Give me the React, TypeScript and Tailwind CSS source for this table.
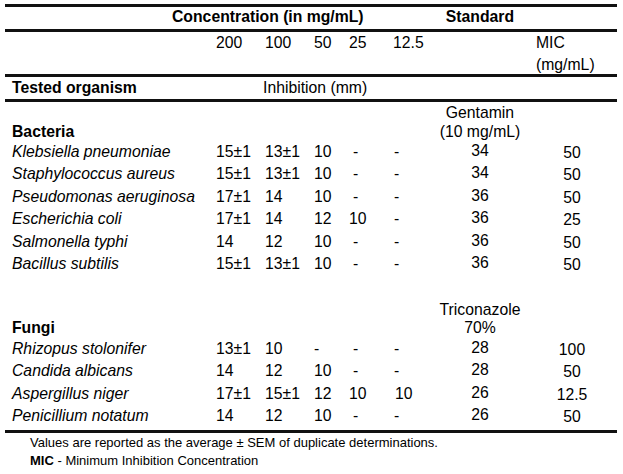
import React from "react";

const grid =
  "grid grid-cols-[204px_49px_49px_35px_44px_37px_100px_84px] pl-[7px]";

type Row = string[];

const bacteria: Row[] = [
  ["Klebsiella pneumoniae", "15±1", "13±1", "10", "-", "-", "34", "50"],
  ["Staphylococcus aureus", "15±1", "13±1", "10", "-", "-", "34", "50"],
  ["Pseudomonas aeruginosa", "17±1", "14", "10", "-", "-", "36", "50"],
  ["Escherichia coli", "17±1", "14", "12", "10", "-", "36", "25"],
  ["Salmonella typhi", "14", "12", "10", "-", "-", "36", "50"],
  ["Bacillus subtilis", "15±1", "13±1", "10", "-", "-", "36", "50"],
];

const fungi: Row[] = [
  ["Rhizopus stolonifer", "13±1", "10", "-", "-", "-", "28", "100"],
  ["Candida albicans", "14", "12", "10", "-", "-", "28", "50"],
  ["Aspergillus niger", "17±1", "15±1", "12", "10", "10", "26", "12.5"],
  ["Penicillium notatum", "14", "12", "10", "-", "-", "26", "50"],
];

function DataRow({ r }: { r: Row }) {
  return (
    <div className={`${grid} h-[22.4px] leading-[22.4px]`}>
      <div className="italic whitespace-nowrap">{r[0]}</div>
      <div>{r[1]}</div>
      <div>{r[2]}</div>
      <div>{r[3]}</div>
      <div className={r[4] === "-" ? "pl-[4px]" : ""}>{r[4]}</div>
      <div className={r[5] === "-" ? "pl-[1px]" : "pl-[2px]"}>{r[5]}</div>
      <div className="text-center -translate-y-[1px]">{r[6]}</div>
      <div className="text-center translate-y-[1px]">{r[7]}</div>
    </div>
  );
}

export default function App() {
  return (
    <div
      className="w-[623px] h-[474px] bg-white text-black text-[15.75px]"
      style={{ fontFamily: '"Liberation Sans", Arial, sans-serif' }}
    >
      <div className="ml-[5px] w-[612px] pt-[4px]">
        {/* Header row 1 */}
        <div className={`${grid} h-[25px] border-t-[3px] border-[#111] leading-[20px] font-bold`}>
          <div className="col-span-6 pl-[160px] whitespace-nowrap">
            Concentration (in mg/mL)
          </div>
          <div className="text-center">Standard</div>
          <div></div>
        </div>
        {/* Header row 2 */}
        <div className={`${grid} h-[45px] border-t-[3px] border-[#111] leading-[22px]`}>
          <div></div>
          <div>200</div>
          <div>100</div>
          <div>50</div>
          <div>25</div>
          <div>12.5</div>
          <div></div>
          <div className="pl-[6px]">
            MIC
            <br />
            (mg/mL)
          </div>
        </div>
        {/* Header row 3 */}
        <div className={`${grid} h-[25px] border-t-[3px] border-[#111] leading-[21px]`}>
          <div className="font-bold">Tested organism</div>
          <div></div>
          <div className="col-span-6 -ml-[2px]">Inhibition (mm)</div>
        </div>
        {/* Body */}
        <div className="border-t-[3px] border-[#111] pt-[1px]">
          <div className={`${grid} h-[38px] leading-[19px]`}>
            <div className="font-bold self-end">Bacteria</div>
            <div className="col-span-5"></div>
            <div className="text-center whitespace-nowrap">
              Gentamin
              <br />
              (10 mg/mL)
            </div>
            <div></div>
          </div>
          {bacteria.map((r) => (
            <DataRow key={r[0]} r={r} />
          ))}
          <div className="h-[25.6px]"></div>
          <div className={`${grid} h-[37px] leading-[18.5px]`}>
            <div className="font-bold self-end">Fungi</div>
            <div className="col-span-5"></div>
            <div className="text-center whitespace-nowrap">
              Triconazole
              <br />
              70%
            </div>
            <div></div>
          </div>
          {fungi.map((r) => (
            <DataRow key={r[0]} r={r} />
          ))}
        </div>
        <div className="mt-[2px] border-t-[3px] border-[#111] pl-[25px] pt-[1px] text-[13px] leading-[18px]">
          <div>Values are reported as the average ± SEM of duplicate determinations.</div>
          <div>
            <span className="font-bold">MIC</span> - Minimum Inhibition Concentration
          </div>
        </div>
      </div>
    </div>
  );
}
